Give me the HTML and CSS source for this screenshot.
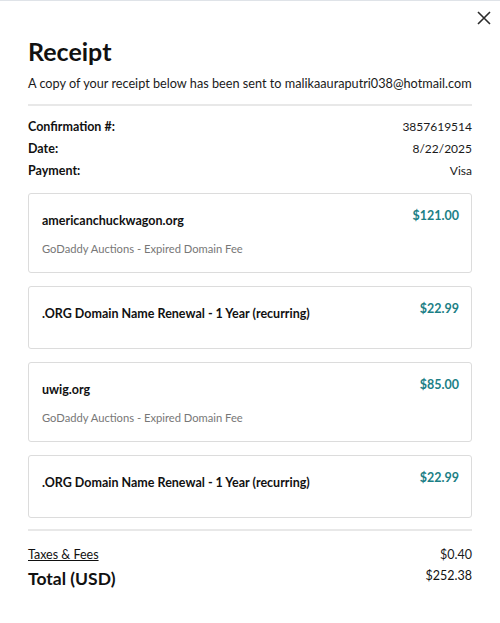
FILE: index.html
```html
<!DOCTYPE html>
<html lang="en">
<head>
<meta charset="utf-8">
<link rel="stylesheet" href="styles.css">
</head>
<body>
<div class="modal">
  <button class="close" aria-label="Close">
    <svg width="14" height="14" viewBox="0 0 14 14"><path d="M1 1L13 13M13 1L1 13" stroke="#2b2b2b" stroke-width="1.6" fill="none"/></svg>
  </button>
  <h1 class="title">Receipt</h1>
  <p class="intro">A copy of your receipt below has been sent to malikaauraputri038@hotmail.com</p>
  <div class="details">
    <div class="row"><span class="label">Confirmation #:</span><span class="value">3857619514</span></div>
    <div class="row"><span class="label">Date:</span><span class="value">8/22/2025</span></div>
    <div class="row"><span class="label">Payment:</span><span class="value">Visa</span></div>
  </div>
  <div class="items">
    <div class="card">
      <div class="info">
        <div class="name">americanchuckwagon.org</div>
        <div class="sub">GoDaddy Auctions - Expired Domain Fee</div>
      </div>
      <div class="price">$121.00</div>
    </div>
    <div class="card single">
      <div class="info">
        <div class="name">.ORG Domain Name Renewal - 1 Year (recurring)</div>
      </div>
      <div class="price">$22.99</div>
    </div>
    <div class="card">
      <div class="info">
        <div class="name">uwig.org</div>
        <div class="sub">GoDaddy Auctions - Expired Domain Fee</div>
      </div>
      <div class="price">$85.00</div>
    </div>
    <div class="card single">
      <div class="info">
        <div class="name">.ORG Domain Name Renewal - 1 Year (recurring)</div>
      </div>
      <div class="price">$22.99</div>
    </div>
  </div>
  <div class="summary">
    <div class="row"><a class="taxes" href="#">Taxes &amp; Fees</a><span class="fee">$0.40</span></div>
    <div class="row total"><span class="total-label">Total (USD)</span><span class="total-value">$252.38</span></div>
  </div>
</div>
</body>
</html>
```
FILE: styles.css
```css
* { box-sizing: border-box; }
html, body { margin: 0; padding: 0; background: #fff; }
body {
  font-family: Lato, "Noto Sans", sans-serif;
  color: #111;
}
.modal {
  position: relative;
  height: 623px;
  border-top: 1px solid #dfe3e8;
  padding: 0 28px;
}
.close {
  position: absolute;
  top: 10px;
  right: 9px;
  width: 14px;
  height: 14px;
  padding: 0;
  border: 0;
  background: none;
  display: flex;
}
.title {
  margin: 34px 0 0;
  font-size: 25px;
  line-height: 32px;
  font-weight: 700;
  color: #111;
}
.intro {
  margin: 8px 0 0;
  font-size: 12.7px;
  line-height: 16px;
  white-space: nowrap;
  padding-bottom: 13px;
  border-bottom: 2px solid #e8e8e8;
  color: #1a1a1a;
}
.details {
  padding-top: 13px;
  display: flex;
  flex-direction: column;
  gap: 6px;
}
.row {
  display: flex;
  justify-content: space-between;
  align-items: flex-start;
  font-size: 12.5px;
  line-height: 16px;
}
.label { font-weight: 700; }
.value { color: #1a1a1a; font-size: 12px; }
.fee { color: #1a1a1a; font-size: 12.5px; }
.items {
  margin-top: 14px;
  display: flex;
  flex-direction: column;
  gap: 13px;
  padding-bottom: 11px;
  border-bottom: 2px solid #e8e8e8;
}
.card {
  border: 1px solid #dcdcdc;
  border-radius: 3px;
  padding: 15px 12px 16px 13px;
  display: flex;
  justify-content: space-between;
  align-items: flex-start;
}
.card.single { padding-bottom: 27px; }
.name {
  margin-top: 5px;
  font-size: 12.5px;
  line-height: 14px;
  font-weight: 700;
  color: #111;
}
.sub {
  margin-top: 14px;
  font-size: 11.2px;
  line-height: 14px;
  color: #777;
}
.price {
  font-size: 12.5px;
  line-height: 14px;
  font-weight: 700;
  color: #1c7f86;
}
.summary {
  padding-top: 16px;
}
.taxes {
  color: #111;
  text-decoration: underline;
}
.row.total { margin-top: 5px; }
.total-label {
  font-size: 17.5px;
  line-height: 22px;
  font-weight: 700;
}
.total-value {
  font-size: 12.5px;
  line-height: 16px;
}
```
